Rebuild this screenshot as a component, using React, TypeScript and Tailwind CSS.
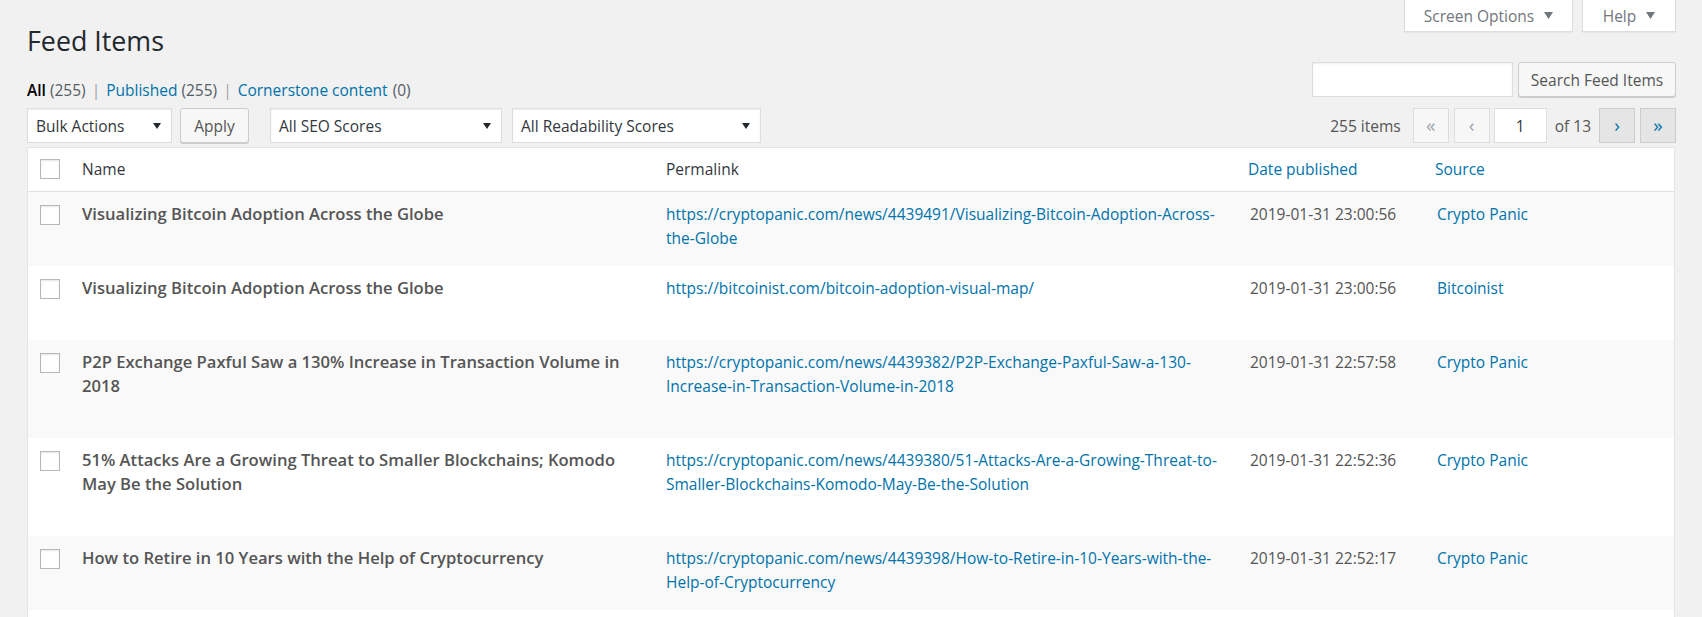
import React from 'react';

type FeedRow = { title: string; link: string; date: string; source: string };

const rows: FeedRow[] = [
  {
    title: 'Visualizing Bitcoin Adoption Across the Globe',
    link: 'https://cryptopanic.com/news/4439491/Visualizing-Bitcoin-Adoption-Across-the-Globe',
    date: '2019-01-31 23:00:56',
    source: 'Crypto Panic',
  },
  {
    title: 'Visualizing Bitcoin Adoption Across the Globe',
    link: 'https://bitcoinist.com/bitcoin-adoption-visual-map/',
    date: '2019-01-31 23:00:56',
    source: 'Bitcoinist',
  },
  {
    title: 'P2P Exchange Paxful Saw a 130% Increase in Transaction Volume in 2018',
    link: 'https://cryptopanic.com/news/4439382/P2P-Exchange-Paxful-Saw-a-130-Increase-in-Transaction-Volume-in-2018',
    date: '2019-01-31 22:57:58',
    source: 'Crypto Panic',
  },
  {
    title: '51% Attacks Are a Growing Threat to Smaller Blockchains; Komodo May Be the Solution',
    link: 'https://cryptopanic.com/news/4439380/51-Attacks-Are-a-Growing-Threat-to-Smaller-Blockchains-Komodo-May-Be-the-Solution',
    date: '2019-01-31 22:52:36',
    source: 'Crypto Panic',
  },
  {
    title: 'How to Retire in 10 Years with the Help of Cryptocurrency',
    link: 'https://cryptopanic.com/news/4439398/How-to-Retire-in-10-Years-with-the-Help-of-Cryptocurrency',
    date: '2019-01-31 22:52:17',
    source: 'Crypto Panic',
  },
];

const Checkbox = () => (
  <span className="block h-5 w-5 border border-[#b4b9be] bg-white shadow-[inset_0_1px_2px_rgba(0,0,0,0.1)]" />
);

const Caret = ({ color = '#32373c' }: { color?: string }) => (
  <svg width="9" height="7" viewBox="0 0 9 7" className="shrink-0">
    <path d="M0 0h9L4.5 7z" fill={color} />
  </svg>
);

const Tab = ({ label, width }: { label: string; width: string }) => (
  <div
    className={`flex h-[32px] items-center justify-center gap-[10px] border border-t-0 border-[#ddd] bg-white text-[#72777c] shadow-[0_1px_1px_rgba(0,0,0,0.04)] ${width}`}
  >
    <span>{label}</span>
    <Caret color="#72777c" />
  </div>
);

const FakeSelect = ({ label, width }: { label: string; width: string }) => (
  <div
    className={`flex h-[35px] items-center justify-between border border-[#ddd] bg-white pl-[8px] pr-[10px] text-[#32373c] shadow-[inset_0_1px_2px_rgba(0,0,0,0.07)] ${width}`}
  >
    <span>{label}</span>
    <svg width="8" height="6" viewBox="0 0 8 6" className="shrink-0">
      <path d="M0 0h8L4 6z" fill="#23282d" />
    </svg>
  </div>
);

const PageButton = ({ glyph, active }: { glyph: string; active?: boolean }) => (
  <span
    className={
      active
        ? 'flex h-[35px] w-[36px] items-center justify-center border border-[#ccc] bg-[#e5e5e5] text-[19px] leading-none text-[#0073aa]'
        : 'flex h-[35px] w-[36px] items-center justify-center border border-[#ddd] bg-[#f7f7f7] text-[19px] leading-none text-[#a0a5aa]'
    }
  >
    {glyph}
  </span>
);

export default function App() {
  return (
    <div className="min-h-screen bg-[#f1f1f1] font-['Open_Sans',sans-serif] text-[15.5px] leading-[24px] text-[#555]">
      {/* title + screen meta tabs */}
      <div className="flex justify-between pl-[27px] pr-[26px]">
        <h1 className="pt-[22px] text-[26.8px] font-normal leading-[38px] text-[#23282d]">Feed Items</h1>
        <div className="flex items-start gap-[9px]">
          <Tab label="Screen Options" width="w-[169px]" />
          <Tab label="Help" width="w-[94px]" />
        </div>
      </div>

      {/* views + search */}
      <div className="mt-[2px] flex h-[46px] justify-between pl-[27px] pr-[26px]">
        <div className="self-end pb-[6px] text-[#555d66]">
          <span className="font-semibold text-black">All</span> (255)
          <span className="mx-[6px] text-[#a0a5aa]">|</span>
          <span className="text-[#0073aa]">Published</span> (255)
          <span className="mx-[6px] text-[#a0a5aa]">|</span>
          <span className="text-[#0073aa]">Cornerstone content</span>
          <span className="ml-[5px]">(0)</span>
        </div>
        <div className="flex h-[35px] gap-[5px]">
          <div className="h-[35px] w-[201px] border border-[#ddd] bg-white shadow-[inset_0_1px_2px_rgba(0,0,0,0.07)]" />
          <button className="h-[35px] w-[158px] rounded-[3px] border border-[#ccc] bg-[#f7f7f7] text-[#555] shadow-[0_1px_0_#ccc]">
            Search Feed Items
          </button>
        </div>
      </div>

      {/* tablenav */}
      <div className="flex h-[35px] items-center justify-between pl-[27px] pr-[26px]">
        <div className="flex items-center">
          <FakeSelect label="Bulk Actions" width="w-[145px]" />
          <button className="ml-[8px] h-[35px] w-[69px] rounded-[3px] border border-[#ccc] bg-[#f7f7f7] text-[#555] shadow-[0_1px_0_#ccc]">
            Apply
          </button>
          <div className="ml-[21px]">
            <FakeSelect label="All SEO Scores" width="w-[232px]" />
          </div>
          <div className="ml-[10px]">
            <FakeSelect label="All Readability Scores" width="w-[249px]" />
          </div>
        </div>
        <div className="flex items-center">
          <span className="mr-[12px]">255 items</span>
          <PageButton glyph="«" />
          <span className="ml-[5px]">
            <PageButton glyph="‹" />
          </span>
          <span className="ml-[4px] flex h-[35px] w-[53px] items-center justify-center border border-[#ddd] bg-white text-[#32373c]">
            1
          </span>
          <span className="mx-[8px]">of 13</span>
          <PageButton glyph="›" active />
          <span className="ml-[5px]">
            <PageButton glyph="»" active />
          </span>
        </div>
      </div>

      {/* list table */}
      <div className="mt-[4px] pl-[27px] pr-[27px]">
        <div className="border border-[#e5e5e5] bg-white shadow-[0_1px_1px_rgba(0,0,0,0.04)]">
          <table className="w-full table-fixed border-collapse text-left">
            <colgroup>
              <col className="w-[44px]" />
              <col className="w-[584px]" />
              <col className="w-[582px]" />
              <col className="w-[187px]" />
              <col />
            </colgroup>
            <thead>
              <tr className="h-[43px] border-b border-[#e1e1e1]">
                <th className="pl-[12px] align-middle">
                  <Checkbox />
                </th>
                <th className="px-[10px] align-middle font-normal text-[#32373c]">Name</th>
                <th className="px-[10px] align-middle font-normal text-[#32373c]">Permalink</th>
                <th className="px-[10px] align-middle font-normal text-[#0073aa]">Date published</th>
                <th className="px-[10px] align-middle font-normal text-[#0073aa]">Source</th>
              </tr>
            </thead>
            <tbody>
              {rows.map((row, i) => (
                <tr key={i} className={i % 2 === 0 ? 'bg-[#f9f9f9]' : 'bg-white'}>
                  <td className="pl-[12px] pt-[13px] align-top">
                    <Checkbox />
                  </td>
                  <td className="px-[10px] py-[10px] align-top">
                    <div className="text-[16.6px] font-semibold text-[#555]">{row.title}</div>
                    <div className="h-[30px]" />
                  </td>
                  <td className="px-[10px] py-[10px] align-top text-[#0073aa]">{row.link}</td>
                  <td className="px-[12px] py-[10px] align-top">{row.date}</td>
                  <td className="px-[12px] py-[10px] align-top text-[#0073aa]">{row.source}</td>
                </tr>
              ))}
              <tr className="h-[74px] bg-white">
                <td colSpan={5} />
              </tr>
            </tbody>
          </table>
        </div>
      </div>
    </div>
  );
}
